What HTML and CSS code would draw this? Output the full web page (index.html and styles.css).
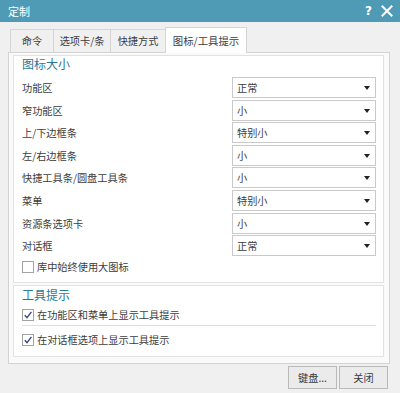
FILE: index.html
```html
<!DOCTYPE html>
<html lang="zh-CN">
<head>
<meta charset="utf-8">
<title>定制</title>
<link rel="stylesheet" href="styles.css">
</head>
<body>
<div class="window">
  <div class="titlebar">
    <span class="title">定制</span>
    <span class="title-btns"><span class="help">?</span><svg class="close" width="12" height="12" viewBox="0 0 12 12"><path d="M1.5 1.5 L10.5 10.5 M10.5 1.5 L1.5 10.5" stroke="#fff" stroke-width="2" stroke-linecap="square"/></svg></span>
  </div>
  <div class="tabs">
    <div class="tab t1">命令</div>
    <div class="tab t2">选项卡/条</div>
    <div class="tab t3">快捷方式</div>
    <div class="tab active t4">图标/工具提示</div>
  </div>
  <div class="panel">
    <div class="group g1">
      <div class="heading">图标大小</div>
      <div class="rows">
        <div class="row"><span class="label">功能区</span><div class="select">正常<i class="arrow"></i></div></div>
        <div class="row"><span class="label">窄功能区</span><div class="select">小<i class="arrow"></i></div></div>
        <div class="row"><span class="label">上/下边框条</span><div class="select">特别小<i class="arrow"></i></div></div>
        <div class="row"><span class="label">左/右边框条</span><div class="select">小<i class="arrow"></i></div></div>
        <div class="row"><span class="label">快捷工具条/圆盘工具条</span><div class="select">小<i class="arrow"></i></div></div>
        <div class="row"><span class="label">菜单</span><div class="select">特别小<i class="arrow"></i></div></div>
        <div class="row"><span class="label">资源条选项卡</span><div class="select">小<i class="arrow"></i></div></div>
        <div class="row"><span class="label">对话框</span><div class="select">正常<i class="arrow"></i></div></div>
      </div>
      <div class="check c-big"><span class="box"></span><span>库中始终使用大图标</span></div>
    </div>
    <div class="group g2">
      <div class="heading">工具提示</div>
      <div class="check c1"><span class="box"><svg width="10" height="10" viewBox="0 0 10 10"><path d="M1.8 5.2 L4 7.6 L8.4 1.8" fill="none" stroke="#34498a" stroke-width="1.4"/></svg></span><span>在功能区和菜单上显示工具提示</span></div>
      <div class="sep"></div>
      <div class="check c2"><span class="box"><svg width="10" height="10" viewBox="0 0 10 10"><path d="M1.8 5.2 L4 7.6 L8.4 1.8" fill="none" stroke="#34498a" stroke-width="1.4"/></svg></span><span>在对话框选项上显示工具提示</span></div>
    </div>
  </div>
  <div class="buttons">
    <div class="btn">键盘...</div>
    <div class="btn">关闭</div>
  </div>
</div>
</body>
</html>
```
FILE: styles.css
```css
html, body {
  margin: 0;
  padding: 0;
}
body {
  background: #f0f0f0;
  font-family: "Microsoft YaHei", "Noto Sans CJK SC", "Noto Sans", sans-serif;
  color: #3c3c3c;
  font-size: 10.2px;
}
.window {
  width: 400px;
  height: 393px;
  background: #f0f0f0;
  overflow: hidden;
}
.titlebar {
  height: 22px;
  background: #4f9bb6;
  display: flex;
  align-items: center;
  justify-content: space-between;
  padding: 0 7px 0 8px;
  color: #fff;
}
.title {
  font-size: 11px;
  line-height: 22px;
}
.title-btns {
  display: flex;
  align-items: center;
  gap: 9px;
}
.help {
  font-family: "DejaVu Sans", sans-serif;
  font-weight: bold;
  font-size: 12px;
  line-height: 22px;
}
.close {
  display: block;
}
.tabs {
  height: 30px;
  display: flex;
  align-items: flex-end;
  padding-left: 10px;
}
.tab {
  height: 22px;
  line-height: 22px;
  border: 1px solid #d5d5d5;
  border-bottom: none;
  border-right: none;
  background: #f0f0f0;
  text-align: center;
  font-size: 10.2px;
  color: #3c3c3c;
  box-sizing: content-box;
}
.t1 { width: 42px; }
.t2 { width: 56px; }
.t3 { width: 54px; }
.tab.active {
  width: 80px;
  height: 25px;
  line-height: 25px;
  background: #fff;
  border-right: 1px solid #d5d5d5;
  margin-bottom: -1px;
  position: relative;
  z-index: 1;
  font-size: 10.4px;
}
.panel {
  margin-left: 8px;
  width: 382px;
  box-sizing: border-box;
  border: 1px solid #d3d3d3;
  background: #fafafa;
  padding: 2px 5px 6px 4px;
  display: flex;
  flex-direction: column;
  gap: 2px;
}
.group {
  background: #fff;
  border: 1px solid #e2e2e2;
  padding: 0 7px 0 8px;
  display: flex;
  flex-direction: column;
}
.g1 {
  padding-bottom: 6px;
}
.g2 {
  padding-top: 1px;
  padding-bottom: 7px;
}
.heading {
  font-size: 12px;
  line-height: 15px;
  color: #2b7896;
}
.rows {
  margin-top: 6px;
  display: flex;
  flex-direction: column;
  gap: 1.6px;
}
.row {
  height: 21px;
  display: flex;
  align-items: center;
  justify-content: space-between;
}
.label {
  line-height: 21px;
}
.select {
  width: 144px;
  height: 21px;
  box-sizing: border-box;
  border: 1px solid #c9c9c9;
  background: #fff;
  padding-left: 4px;
  line-height: 19px;
  display: flex;
  align-items: center;
  justify-content: space-between;
  padding-right: 5px;
}
.arrow {
  width: 0;
  height: 0;
  border-left: 3.5px solid transparent;
  border-right: 3.5px solid transparent;
  border-top: 4px solid #222;
  margin-top: 1px;
}
.check {
  height: 18px;
  display: flex;
  align-items: center;
  gap: 3px;
}
.c-big { margin-top: 1.8px; }
.c1 { margin-top: 4px; }
.c2 { margin-top: 5px; }
.box {
  width: 10px;
  height: 10px;
  border: 1px solid #a3a3a3;
  background: #fff;
  display: flex;
  align-items: center;
  justify-content: center;
  flex: none;
}
.box svg { display: block; }
.sep {
  margin-top: 1px;
  height: 1px;
  background: #e0e0e0;
}
.buttons {
  display: flex;
  justify-content: flex-end;
  gap: 2px;
  padding-right: 12px;
  margin-top: 2px;
}
.btn {
  width: 49px;
  height: 23px;
  box-sizing: border-box;
  border: 1px solid #b9b9b9;
  background: #ebebeb;
  text-align: center;
  line-height: 21px;
  font-size: 10.2px;
  color: #3c3c3c;
}
```
